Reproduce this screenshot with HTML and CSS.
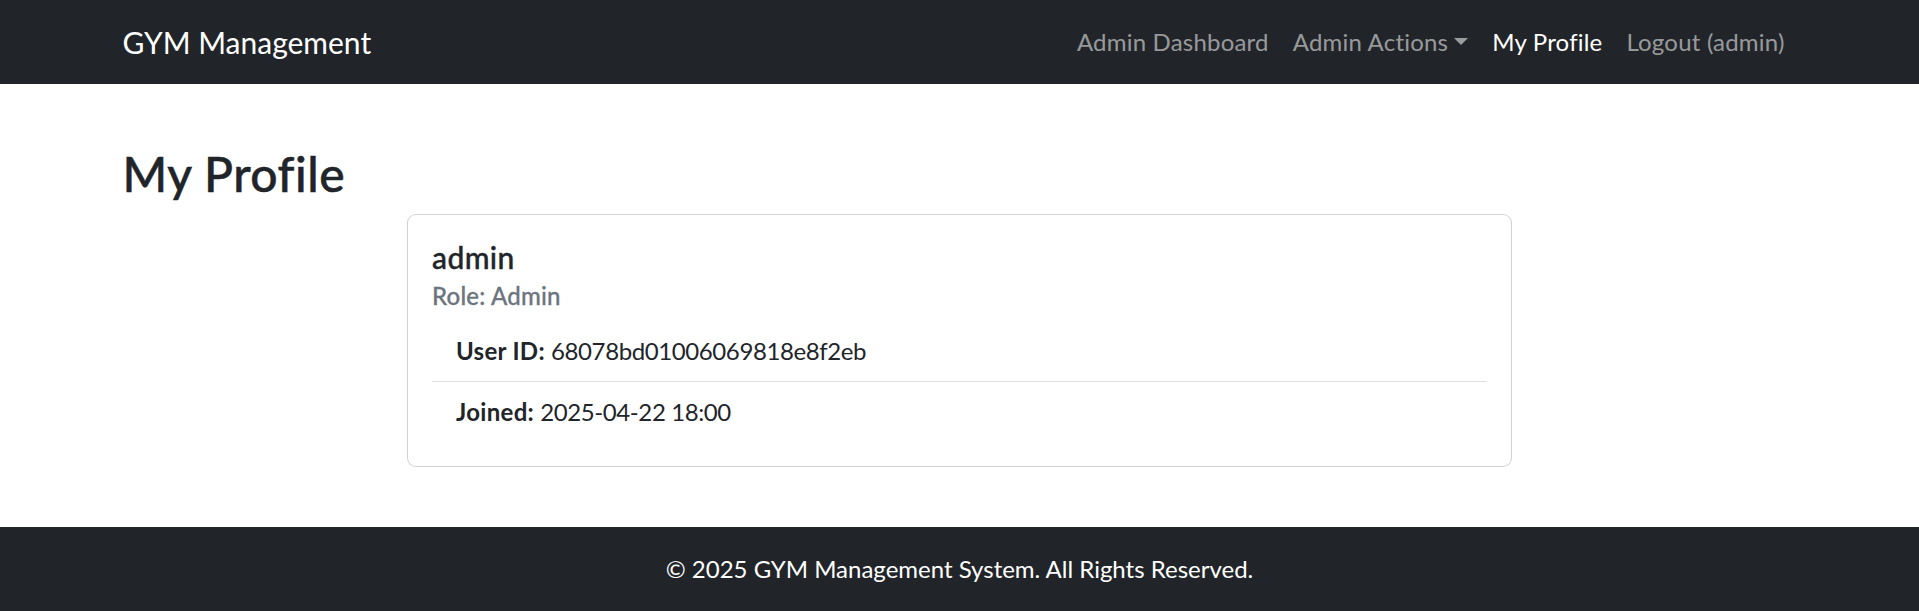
FILE: index.html
```html
<!DOCTYPE html>
<html lang="en">
<head>
<meta charset="utf-8">
<title>My Profile - GYM Management</title>
<link rel="stylesheet" href="styles.css">
</head>
<body>
<nav class="navbar">
  <div class="container navbar-inner">
    <a class="brand" href="#">GYM Management</a>
    <ul class="nav">
      <li><a class="nav-link" href="#">Admin Dashboard</a></li>
      <li><a class="nav-link dropdown-toggle" href="#">Admin Actions</a></li>
      <li><a class="nav-link active" href="#">My Profile</a></li>
      <li><a class="nav-link" href="#">Logout (admin)</a></li>
    </ul>
  </div>
</nav>

<main class="container main">
  <h1 class="page-title">My Profile</h1>
  <div class="card">
    <div class="card-body">
      <h5 class="card-title">admin</h5>
      <h6 class="card-subtitle">Role: Admin</h6>
      <ul class="list-group">
        <li class="list-item"><strong>User ID:</strong> <span class="value">68078bd01006069818e8f2eb</span></li>
        <li class="list-item"><strong>Joined:</strong> <span class="value">2025-04-22 18:00</span></li>
      </ul>
    </div>
  </div>
</main>

<footer class="footer">
  <p class="footer-text">© 2025 GYM Management System. All Rights Reserved.</p>
</footer>
</body>
</html>
```

FILE: styles.css
```css
* {
  box-sizing: border-box;
}

html, body {
  margin: 0;
  padding: 0;
}

body {
  font-family: "Segoe UI", Lato, "Open Sans", sans-serif;
  font-size: 24px;
  line-height: 1.5;
  color: #212529;
  background: #fff;
}

a {
  text-decoration: none;
}

.container {
  width: 100%;
  max-width: 1710px;
  margin: 0 auto;
  padding: 0 18px;
}

/* Navbar */
.navbar {
  background: #212529;
  padding: 12px 0;
}

.navbar-inner {
  display: flex;
  align-items: center;
  justify-content: space-between;
}

.brand {
  color: #fff;
  font-size: 30px;
  line-height: 45px;
  padding: 7.5px 0;
  margin-right: 24px;
  white-space: nowrap;
}

.nav {
  display: flex;
  list-style: none;
  margin: 0;
  padding: 0;
}

.nav-link {
  display: block;
  padding: 12px;
  line-height: 36px;
  letter-spacing: 0.2px;
  color: rgba(255, 255, 255, 0.55);
  white-space: nowrap;
}

.nav-link.active {
  color: #fff;
}

.dropdown-toggle::after {
  content: "";
  display: inline-block;
  margin-left: 0.255em;
  vertical-align: 0.255em;
  border-top: 0.3em solid;
  border-right: 0.3em solid transparent;
  border-left: 0.3em solid transparent;
  border-bottom: 0;
}

/* Main */
.main {
  padding-top: 61px;
}

.page-title {
  font-size: 48px;
  font-weight: 500;
  line-height: 1.2;
  letter-spacing: 0.5px;
  -webkit-text-stroke: 0.5px currentColor;
  margin: 0 0 11px;
}

.card {
  max-width: 1105px;
  margin: 0 auto;
  border: 1px solid rgba(0, 0, 0, 0.175);
  border-radius: 9px;
  background: #fff;
}

.card-body {
  padding: 24px;
}

.card-title {
  font-size: 30px;
  font-weight: 500;
  line-height: 1.2;
  letter-spacing: 0.4px;
  -webkit-text-stroke: 0.4px currentColor;
  margin: 0 0 12px;
}

.card-subtitle {
  font-size: 24px;
  font-weight: 500;
  line-height: 1.2;
  letter-spacing: 0.2px;
  -webkit-text-stroke: 0.3px currentColor;
  margin: -5px 0 11px;
  color: #6c757d;
}

.list-group {
  list-style: none;
  margin: 0;
  padding: 0;
}

.list-item {
  padding: 12px 24px;
  border-bottom: 1px solid rgba(0, 0, 0, 0.125);
}

.list-item:last-child {
  border-bottom: 0;
}

.list-item strong {
  font-weight: 700;
  letter-spacing: 0.3px;
}

.list-item .value {
  letter-spacing: -0.4px;
}

/* Footer */
.footer {
  margin-top: 60px;
  background: #212529;
  color: #fff;
  text-align: center;
  padding: 24px 0;
}

.footer-text {
  margin: 0;
  line-height: 36px;
}
```
